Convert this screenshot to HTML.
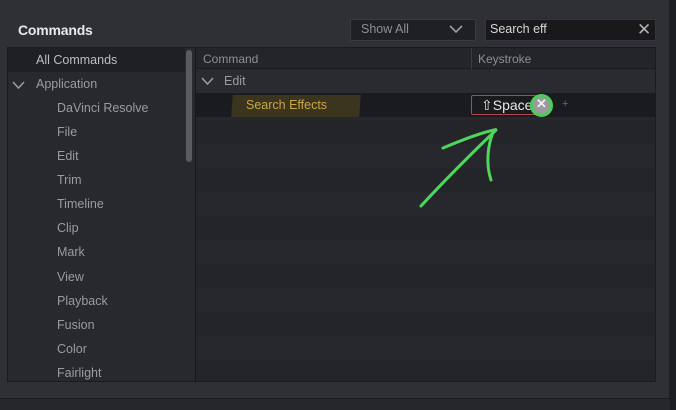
<!DOCTYPE html>
<html><head><meta charset="utf-8"><style>
*{margin:0;padding:0;box-sizing:border-box}
body{width:676px;height:410px;background:#2f3035;font-family:"Liberation Sans",sans-serif;position:relative;overflow:hidden}
.abs{position:absolute}
.t{color:#9a9ba0;font-size:12.5px;position:absolute}
</style></head><body>
<div class="abs" style="left:669px;top:0;width:7px;height:410px;background:#1d1e21"></div>
<div class="abs" style="left:0;top:398px;width:670px;height:12px;background:#26272b;border-top:1px solid #1a1b1e"></div>
<div class="abs" style="left:18px;top:22px;color:#e8e8ea;font-size:14px;font-weight:bold;letter-spacing:-0.2px">Commands</div>
<div class="abs" style="left:350px;top:19px;width:126px;height:22px;background:#1f2024;border:1px solid #3a3b40"></div>
<div class="t" style="left:361px;top:22px;color:#8e8f94">Show All</div>
<svg class="abs" style="left:449px;top:25px" width="14" height="9"><path d="M1 1 L7 7 L13 1" stroke="#9a9ba0" stroke-width="1.6" fill="none"/></svg>
<div class="abs" style="left:485px;top:19px;width:171px;height:22px;background:#19191c;border:1px solid #35363b"></div>
<div class="t" style="left:490px;top:22px;color:#d8d8da">Search eff</div>
<div class="t" style="left:637px;top:20px;color:#b0b0b4;font-size:17px">✕</div>
<div class="abs" style="left:7px;top:47px;width:189px;height:335px;background:#28292e;border:1px solid #1a1b1e"></div>
<div class="abs" style="left:8px;top:48px;width:177px;height:24px;background:#1f2024"></div>
<div class="abs" style="left:186px;top:50px;width:6px;height:112px;background:#5a5b60;border-radius:3px"></div>
<div class="t" style="left:36px;top:53px;color:#bcbdc1">All Commands</div>
<svg class="abs" style="left:12px;top:81px" width="13" height="9"><path d="M1 1 L6.5 7 L12 1" stroke="#9a9ba0" stroke-width="1.6" fill="none"/></svg>
<div class="t" style="left:36px;top:77px">Application</div>
<div class="t" style="left:57px;top:101px">DaVinci Resolve</div>
<div class="t" style="left:57px;top:125px">File</div>
<div class="t" style="left:57px;top:149px">Edit</div>
<div class="t" style="left:57px;top:173px">Trim</div>
<div class="t" style="left:57px;top:197px">Timeline</div>
<div class="t" style="left:57px;top:221px">Clip</div>
<div class="t" style="left:57px;top:245px">Mark</div>
<div class="t" style="left:57px;top:270px">View</div>
<div class="t" style="left:57px;top:294px">Playback</div>
<div class="t" style="left:57px;top:318px">Fusion</div>
<div class="t" style="left:57px;top:342px">Color</div>
<div class="t" style="left:57px;top:366px">Fairlight</div>
<div class="abs" style="left:195px;top:47px;width:461px;height:335px;background:repeating-linear-gradient(#27282d 0 24px,#242529 24px 48px);border:1px solid #1a1b1e;border-left:1px solid #161719"></div>
<div class="abs" style="left:196px;top:48px;width:459px;height:21px;background:#242529;border-bottom:1px solid #1a1b1e"></div>
<div class="abs" style="left:471px;top:48px;width:1px;height:21px;background:#3a3b40"></div>
<div class="t" style="left:203px;top:52px;font-size:12px;color:#8e8f94">Command</div>
<div class="t" style="left:478px;top:52px;font-size:12px;color:#8e8f94">Keystroke</div>
<div class="abs" style="left:196px;top:69px;width:459px;height:24px;background:#2a2b30"></div>
<svg class="abs" style="left:201px;top:77px" width="13" height="9"><path d="M1 1 L6.5 7 L12 1" stroke="#9a9ba0" stroke-width="1.6" fill="none"/></svg>
<div class="t" style="left:224px;top:74px">Edit</div>
<div class="abs" style="left:196px;top:93px;width:459px;height:24px;background:#1a1b1e"></div>
<div class="abs" style="left:232px;top:95px;width:128px;height:22px;background:#4a3f20;opacity:.7;transform:skewX(-4deg)"></div>
<div class="t" style="left:246px;top:98px;color:#c9a742">Search Effects</div>
<div class="abs" style="left:471px;top:95px;width:74px;height:20px;border:1px solid #b0464e;border-radius:2px"></div>
<div class="t" style="left:481px;top:97px;color:#e8e8ea;font-size:14px">⇧Space</div>
<div class="abs" style="left:530px;top:94px;width:23px;height:23px;border-radius:50%;background:#9a9b9f;border:3px solid #4ccc5a"></div>
<div class="abs" style="left:536px;top:96px;color:#f0f0f0;font-size:13px;font-weight:bold">✕</div>
<div class="t" style="left:562px;top:98px;font-size:11px;color:#6a6b70">+</div>
<svg class="abs" style="left:0;top:0" width="676" height="410"><path d="M421 206 C445 180 470 155 496 130 M443 148 C462 140 480 133 494 130 C487 146 486 165 491 180" stroke="#4cd65a" stroke-width="3" fill="none" stroke-linecap="round"/></svg>
</body></html>
